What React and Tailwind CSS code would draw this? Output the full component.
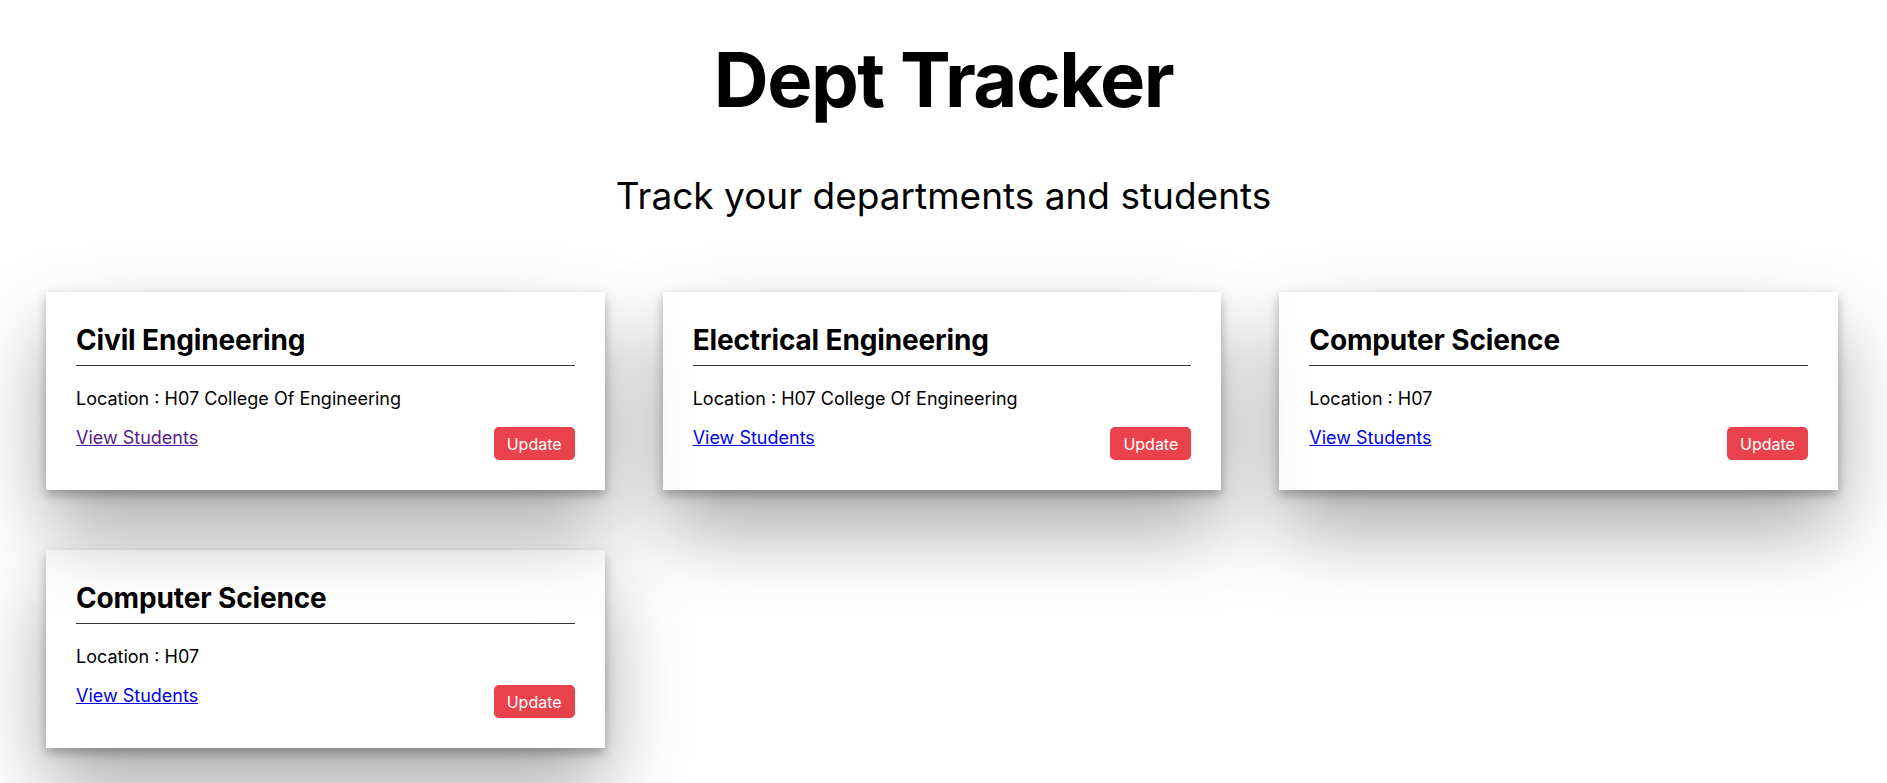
import React from "react";

const depts = [
  { name: "Civil Engineering", loc: "H07 College Of Engineering", visited: true, z: "z-40" },
  { name: "Electrical Engineering", loc: "H07 College Of Engineering", z: "z-30" },
  { name: "Computer Science", loc: "H07", z: "z-20" },
  { name: "Computer Science", loc: "H07", z: "z-10" },
];

function Card({ d }) {
  return (
    <div
      className={
        "relative bg-white px-[30px] pt-[31px] pb-[30px] shadow-[0_5px_10px_rgba(0,0,0,0.28),0_40px_80px_rgba(0,0,0,0.34)] " +
        d.z
      }
    >
      <h2 className="text-[28px] font-bold leading-[34px] tracking-[-0.005em] pb-[8px] border-b border-[#333]">{d.name}</h2>
      <p className="mt-[22px] text-[18px] leading-[22px]">Location : {d.loc}</p>
      <div className="mt-[17px] flex items-start justify-between">
        <a
          href="#"
          className={
            "text-[18px] leading-[22px] underline " +
            (d.visited ? "text-[#551a8b]" : "text-[#0000ee]")
          }
        >
          View Students
        </a>
        <button className="h-[33px] w-[81px] rounded-[5px] bg-[#ea424b] text-white text-[16px]">
          Update
        </button>
      </div>
    </div>
  );
}

export default function App() {
  return (
    <div className="min-h-screen bg-white text-black" style={{ fontFamily: "Inter, 'Noto Sans', sans-serif" }}>
      <h1 className="pt-[33px] text-center text-[76px] font-bold leading-[93px] tracking-[-0.02em]">Dept Tracker</h1>
      <p className="mt-[48px] text-center text-[37px] leading-[44px]">Track your departments and students</p>
      <div className="mt-[74px] grid grid-cols-3 gap-x-[58px] gap-y-[60px] pl-[46px] pr-[49px] pb-[40px]">
        {depts.map((d, i) => (
          <Card key={i} d={d} />
        ))}
      </div>
    </div>
  );
}
